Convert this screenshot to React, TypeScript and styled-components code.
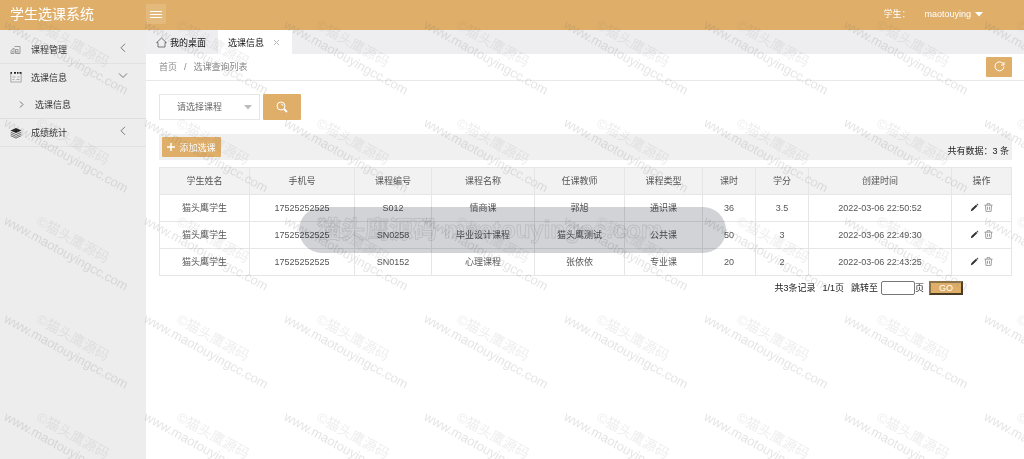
import React from "react";
import styled, { createGlobalStyle } from "styled-components";

const GOLD = "#dfae68";

const GlobalStyle = createGlobalStyle`
  *, *::before, *::after { box-sizing: border-box; }
  html, body { margin: 0; }
  body, button, input, select {
    font-family: "Liberation Sans", "Noto Sans CJK SC", sans-serif;
    font-size: 9px;
  }
  body { background: #fff; color: #333; }
  a { color: inherit; text-decoration: none; }
  button { padding: 0; border: 0; background: none; color: inherit; cursor: pointer; }
  svg { display: block; flex: none; }
`;

const Page = styled.div`
  position: relative;
  display: flex;
  flex-direction: column;
  min-height: 100vh;
  overflow: hidden;
`;

const TopBar = styled.header`
  display: flex;
  align-items: center;
  height: 30px;
  padding-bottom: 2px;
  background: ${GOLD};
  color: #fff;
`;

const Brand = styled.h1`
  width: 146px;
  margin: 0;
  padding-left: 10px;
  font-size: 14px;
  line-height: 28px;
  font-weight: 400;
`;

const MenuToggle = styled.button`
  display: grid;
  place-items: center;
  width: 20px;
  height: 20px;
  background: #e4b97c;
`;

const Account = styled.div`
  display: flex;
  align-items: center;
  gap: 14px;
  margin-left: auto;
  padding-right: 41px;
  line-height: 28px;
`;

const AccountButton = styled.button`
  display: flex;
  align-items: center;
  gap: 4px;
`;

const Body = styled.div`
  display: flex;
  flex: 1;
`;

const Sidebar = styled.nav`
  flex: none;
  width: 146px;
  padding-top: 6px;
  background: #ededed;
`;

const NavButton = styled.button`
  display: flex;
  align-items: center;
  gap: 9px;
  width: 100%;
  height: 28px;
  padding: 0 18px 0 10px;
  border-bottom: 1px solid #e2e2e2;
`;

const NavGroup = styled.div<{ $open?: boolean }>`
  border-bottom: ${(p) => (p.$open ? "1px solid #dedede" : "0")};

  ${NavButton} {
    height: ${(p) => (p.$open ? "26px" : "28px")};
    border-bottom-width: ${(p) => (p.$open ? "0" : "1px")};
  }
`;

const NavChevron = styled.svg`
  margin: 0 0 3px auto;
`;

const SubLink = styled.a`
  display: flex;
  align-items: center;
  gap: 11px;
  height: 28px;
  padding-left: 19px;
`;

const Main = styled.main`
  flex: 1;
  min-width: 0;
`;

const Tabs = styled.div`
  display: flex;
  height: 24px;
  background: #eeeef0;
`;

const Tab = styled.button<{ $active?: boolean }>`
  display: flex;
  align-items: center;
  gap: ${(p) => (p.$active ? "9px" : "3px")};
  padding: 0 12px 0 10px;
  background: ${(p) => (p.$active ? "#fff" : "transparent")};
  color: #111;
`;

const CrumbBar = styled.div`
  display: flex;
  align-items: center;
  justify-content: space-between;
  height: 27px;
  padding: 0 12px 1px 13px;
  border-bottom: 1px solid #e8e8e8;
`;

const Crumbs = styled.div`
  display: flex;
  align-items: baseline;
  gap: 7px;
  color: #888;
`;

const GoldButton = styled.button<{ $w: number; $h: number }>`
  display: flex;
  align-items: center;
  justify-content: center;
  gap: 4px;
  width: ${(p) => p.$w}px;
  height: ${(p) => p.$h}px;
  border-radius: 1px;
  background: ${GOLD};
  color: #fff;
`;

const Content = styled.div`
  padding: 13px 12px 0 13px;
`;

const SearchRow = styled.form`
  display: flex;
  gap: 3px;
`;

const SelectBox = styled.div`
  display: flex;
  align-items: center;
  width: 101px;
  height: 26px;
  padding-right: 7px;
  border: 1px solid #e6e6e6;
`;

const CourseSelect = styled.select`
  flex: 1;
  min-width: 0;
  height: 24px;
  padding: 0 0 0 17px;
  border: 0;
  appearance: none;
  background: transparent;
  color: #666;
`;

const Toolbar = styled.div`
  display: flex;
  align-items: center;
  justify-content: space-between;
  height: 26px;
  margin: 14px 0 7px;
  padding: 0 3px;
  background: #f0f0f0;
`;

const Total = styled.span`
  padding-top: 7px;
  color: #222;
`;

const Table = styled.table`
  width: 100%;
  border-collapse: collapse;
  table-layout: fixed;
  color: #555;

  th, td {
    height: 27px;
    padding: 0 0 1px;
    border: 1px solid #e6e6e6;
    font-weight: 400;
    text-align: center;
  }
  th { background: #f2f2f2; }
`;

const Actions = styled.div`
  display: flex;
  justify-content: center;
  gap: 5px;
`;

const Pager = styled.form`
  display: flex;
  align-items: center;
  justify-content: flex-end;
  margin-top: 5px;
  padding-right: 49px;
  color: #222;
  line-height: 14px;
`;

const PagerText = styled.span`
  margin-right: 7px;
`;

const PageLabel = styled.label`
  display: flex;
  align-items: center;
`;

const PageInput = styled.input`
  width: 34px;
  height: 14px;
  margin-left: 3px;
  padding: 0 2px;
  border: 1px solid #777;
  border-radius: 2px;
`;

const GoButton = styled.button`
  width: 34px;
  height: 14px;
  margin-left: 5px;
  border: 2px solid;
  border-color: #8b7347 #4a3c24 #4a3c24 #8b7347;
  background: ${GOLD};
  color: #fff;
  line-height: 10px;
`;

const Watermarks = styled.div`
  position: absolute;
  top: 17px;
  left: 5px;
  display: grid;
  grid-template-columns: repeat(8, 140px);
  grid-auto-rows: 98px;
  pointer-events: none;
  color: rgba(120, 120, 120, 0.2);
  line-height: 14px;
  white-space: nowrap;
`;

const Mark = styled.div`
  position: relative;
`;

const MarkLine = styled.span<{ $title?: boolean }>`
  position: absolute;
  left: ${(p) => (p.$title ? "33px" : "0")};
  top: 0;
  font-size: ${(p) => (p.$title ? "14px" : "13px")};
  transform: rotate(29deg);
  transform-origin: 0 50%;
  opacity: ${(p) => (p.$title ? 0.65 : 1)};
`;

const Pill = styled.div`
  position: absolute;
  top: 207px;
  left: 299px;
  width: 427px;
  height: 46px;
  padding-left: 18px;
  border-radius: 23px;
  background: #d2d3d7;
  color: #d2d3d7;
  -webkit-text-stroke: 1px #bebfc3;
  mix-blend-mode: multiply;
  font-size: 24px;
  font-weight: 700;
  line-height: 46px;
  white-space: nowrap;
  pointer-events: none;
`;

const Chevron = ({ down }: { down?: boolean }) => (
  <NavChevron width="10" height="10" viewBox="0 0 10 10" fill="none" stroke="#777">
    <path d={down ? "M1 2.5 5 6.5 9 2.5" : "M7 .8 3 4.8 7 8.8"} />
  </NavChevron>
);

const Caret = ({ color }: { color: string }) => (
  <svg width="8" height="5" viewBox="0 0 8 5" fill={color}>
    <path d="M0 0h8L4 4.500z" />
  </svg>
);

const CourseIcon = () => (
  <svg width="12" height="12" viewBox="0 0 12 12" fill="none" stroke="#888" strokeWidth=".8">
    <path d="M1 9.500V6.500L4 4v5.500zM4.500 2.500H10v7H5.500V5.500H8v4M2.500 7v1.500M6.700 7v1.500" />
  </svg>
);

const CalendarIcon = () => (
  <svg width="12" height="12" viewBox="0 0 12 12" fill="none" stroke="#999" strokeWidth=".8">
    <path d="M.8 2v9h10.400V2M2.500 6h3M2.500 8.500h2M6.500 8.500h3M7.500 6h2" />
    <path d="M.5 1.800h1.500M4 1.800h2M7 1.800h1.500M9.500 1.800h2" stroke="#222" strokeWidth="1.800" />
  </svg>
);

const LayersIcon = () => (
  <svg width="12" height="12" viewBox="0 0 12 12" fill="#222">
    <path d="M6 1 11.500 3.500 6 6 .5 3.500z" />
    <path d="M.7 5.200 6 7.600l5.300-2.400M.7 7 6 9.400 11.300 7M.7 8.700 6 11.100l5.300-2.400" fill="none" stroke="#555" strokeWidth=".8" />
  </svg>
);

const HomeIcon = () => (
  <svg width="11" height="11" viewBox="0 0 11 11" fill="none" stroke="#555" strokeWidth=".8">
    <path d="M.6 5.600 5.500 1l4.900 4.600H9V10H2V5.600z" />
  </svg>
);

const PencilIcon = () => (
  <svg width="9" height="9" viewBox="0 0 9 9" fill="#333">
    <path d="M.8 8.200 1.400 6 6 1.700 7.400 3 2.900 7.500zM6.500 1.200 7.200.6 8.500 1.900 7.800 2.600z" />
  </svg>
);

const TrashIcon = () => (
  <svg width="9" height="9" viewBox="0 0 9 9" fill="none" stroke="#888" strokeWidth=".8">
    <path d="M.4 2.200h8.200M3 2V.7h3V2M1.500 2.400l.4 6h5.200l.4-6M3.500 3.800v3M5.500 3.800v3" />
  </svg>
);

const columns: [string, number][] = [
  ["学生姓名", 90], ["手机号", 105], ["课程编号", 77], ["课程名称", 103], ["任课教师", 90],
  ["课程类型", 78], ["课时", 53], ["学分", 53], ["创建时间", 143], ["操作", 60],
];

const rows = [
  ["猫头鹰学生", "17525252525", "S012", "情商课", "郭旭", "通识课", "36", "3.5", "2022-03-06 22:50:52"],
  ["猫头鹰学生", "17525252525", "SN0258", "毕业设计课程", "猫头鹰测试", "公共课", "50", "3", "2022-03-06 22:49:30"],
  ["猫头鹰学生", "17525252525", "SN0152", "心理课程", "张依依", "专业课", "20", "2", "2022-03-06 22:43:25"],
];

const tableWidth = columns.reduce((sum, [, w]) => sum + w, 0);

export default function App() {
  return (
    <Page>
      <GlobalStyle />
      <TopBar>
        <Brand>学生选课系统</Brand>
        <MenuToggle aria-label="菜单">
          <svg width="12" height="8" viewBox="0 0 12 8" stroke="#fff">
            <path d="M0 1.500h12M0 4.500h12M0 7.500h12" />
          </svg>
        </MenuToggle>
        <Account>
          <span>学生：</span>
          <AccountButton>maotouying <Caret color="#fff" /></AccountButton>
        </Account>
      </TopBar>
      <Body>
        <Sidebar>
          <NavGroup>
            <NavButton><CourseIcon />课程管理<Chevron /></NavButton>
          </NavGroup>
          <NavGroup $open>
            <NavButton><CalendarIcon />选课信息<Chevron down /></NavButton>
            <SubLink href="#list">
              <svg width="5" height="7" viewBox="0 0 5 7" fill="none" stroke="#777">
                <path d="M1 .5 4 3.500 1 6.500" />
              </svg>
              选课信息
            </SubLink>
          </NavGroup>
          <NavGroup>
            <NavButton><LayersIcon />成绩统计<Chevron /></NavButton>
          </NavGroup>
        </Sidebar>
        <Main>
          <Tabs>
            <Tab><HomeIcon />我的桌面</Tab>
            <Tab $active>
              选课信息
              <svg width="7" height="7" viewBox="0 0 7 7" stroke="#bbb">
                <path d="M1 1 6 6M6 1 1 6" />
              </svg>
            </Tab>
          </Tabs>
          <CrumbBar>
            <Crumbs><a href="#home">首页</a><span>/</span><span>选课查询列表</span></Crumbs>
            <GoldButton $w={26} $h={20} aria-label="刷新">
              <svg width="11" height="11" viewBox="0 0 11 11" fill="none" stroke="#fff">
                <path d="M9.600 3.500A4.500 4.500 0 1 0 10 5.500M10 1v3H7" />
              </svg>
            </GoldButton>
          </CrumbBar>
          <Content>
            <SearchRow>
              <SelectBox>
                <CourseSelect aria-label="课程"><option>请选择课程</option></CourseSelect>
                <Caret color="#bbb" />
              </SelectBox>
              <GoldButton type="button" $w={38} $h={26} aria-label="搜索">
                <svg width="12" height="12" viewBox="0 0 12 12" fill="none" stroke="#fff">
                  <circle cx="5" cy="5" r="4" />
                  <path d="M5 3A2 2 0 0 1 7 5" strokeWidth=".8" />
                  <path d="M8 8 11 11" strokeWidth="1.800" />
                </svg>
              </GoldButton>
            </SearchRow>
            <Toolbar>
              <GoldButton $w={59} $h={20}>
                <svg width="8" height="8" viewBox="0 0 8 8" stroke="#fff" strokeWidth="1.500">
                  <path d="M4 0v8M0 4h8" />
                </svg>
                添加选课
              </GoldButton>
              <Total>共有数据：3 条</Total>
            </Toolbar>
            <Table>
              <colgroup>
                {columns.map(([name, w]) => (
                  <col key={name} style={{ width: `${(w / tableWidth) * 100}%` }} />
                ))}
              </colgroup>
              <thead>
                <tr>{columns.map(([name]) => <th key={name}>{name}</th>)}</tr>
              </thead>
              <tbody>
                {rows.map((row) => (
                  <tr key={row[8]}>
                    {row.map((cell, i) => <td key={i}>{cell}</td>)}
                    <td>
                      <Actions>
                        <button aria-label="编辑"><PencilIcon /></button>
                        <button aria-label="删除"><TrashIcon /></button>
                      </Actions>
                    </td>
                  </tr>
                ))}
              </tbody>
            </Table>
            <Pager>
              <PagerText>共3条记录</PagerText>
              <PagerText>1/1页</PagerText>
              <PageLabel>跳转至<PageInput />页</PageLabel>
              <GoButton type="button">GO</GoButton>
            </Pager>
          </Content>
        </Main>
      </Body>
      <Watermarks aria-hidden="true">
        {Array.from({ length: 8 * 5 }, (_, i) => (
          <Mark key={i}>
            <MarkLine $title>©猫头鹰源码</MarkLine>
            <MarkLine>www.maotouyingcc.com</MarkLine>
          </Mark>
        ))}
      </Watermarks>
      <Pill aria-hidden="true">猫头鹰源码 maotouyingcc.com</Pill>
    </Page>
  );
}
